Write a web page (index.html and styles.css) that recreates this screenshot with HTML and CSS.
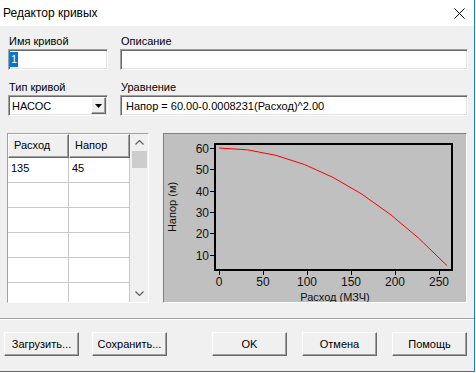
FILE: index.html
```html
<!DOCTYPE html>
<html lang="ru">
<head>
  <meta charset="UTF-8" />
  <title>Редактор кривых</title>
  <link rel="stylesheet" href="styles.css">
</head>
<body>

  <div class="window">
    <!-- Title bar -->
    <div class="titlebar">
      <span class="title">Редактор кривых</span>
      <svg class="close" width="11" height="11" viewBox="0 0 11 11">
        <path d="M0.5 0.5 L10.5 10.5 M10.5 0.5 L0.5 10.5" stroke="#000" stroke-width="1" fill="none"/>
      </svg>
    </div>

    <div class="content">
      <!-- Name / description / type / equation -->
      <div class="fields">
        <div class="label">Имя кривой</div>
        <div class="label">Описание</div>
        <div class="field"><span class="selected">1</span></div>
        <div class="field"></div>

        <div class="label row2">Тип кривой</div>
        <div class="label row2">Уравнение</div>
        <div class="field combo">
          <span class="combo-text">НАСОС</span>
          <span class="drop">
            <svg width="7" height="4" viewBox="0 0 7 4"><path d="M0 0 H7 L3.5 4 Z" fill="#000"/></svg>
          </span>
        </div>
        <div class="field text">Напор = 60.00-0.0008231(Расход)^2.00</div>
      </div>

      <div class="middle">
        <!-- Data grid -->
        <div class="grid-box">
          <div class="grid">
            <div class="grid-row">
              <div class="head-cell">Расход</div>
              <div class="head-cell">Напор</div>
            </div>
            <div class="grid-row">
              <div class="cell">135</div>
              <div class="cell">45</div>
            </div>
            <div class="grid-row"><div class="cell"></div><div class="cell"></div></div>
            <div class="grid-row"><div class="cell"></div><div class="cell"></div></div>
            <div class="grid-row"><div class="cell"></div><div class="cell"></div></div>
            <div class="grid-row"><div class="cell"></div><div class="cell"></div></div>
            <div class="grid-row"><div class="cell"></div><div class="cell"></div></div>
          </div>
          <div class="scrollbar">
            <div class="arrow">
              <svg width="9" height="5" viewBox="0 0 9 5"><path d="M0.5 4.5 L4.5 0.5 L8.5 4.5" stroke="#606060" stroke-width="1.2" fill="none"/></svg>
            </div>
            <div class="thumb"></div>
            <div class="track"></div>
            <div class="arrow">
              <svg width="9" height="5" viewBox="0 0 9 5"><path d="M0.5 0.5 L4.5 4.5 L8.5 0.5" stroke="#606060" stroke-width="1.2" fill="none"/></svg>
            </div>
          </div>
        </div>

        <!-- Pump curve chart -->
        <div class="chart">
          <svg width="302" height="168" viewBox="0 0 302 168">
            <rect x="51" y="10" width="237" height="126" fill="none" stroke="#000" stroke-width="2"/>
            <path d="M55 14 Q169 14 283 131.6" fill="none" stroke="#ff0000" stroke-width="1"/>

            <g stroke="#000" stroke-width="1">
              <line x1="46" y1="14.5" x2="50" y2="14.5"/>
              <line x1="46" y1="35.5" x2="50" y2="35.5"/>
              <line x1="46" y1="57.5" x2="50" y2="57.5"/>
              <line x1="46" y1="78.5" x2="50" y2="78.5"/>
              <line x1="46" y1="99.5" x2="50" y2="99.5"/>
              <line x1="46" y1="121.5" x2="50" y2="121.5"/>
              <line x1="55.5" y1="137" x2="55.5" y2="141"/>
              <line x1="99.5" y1="137" x2="99.5" y2="141"/>
              <line x1="143.5" y1="137" x2="143.5" y2="141"/>
              <line x1="187.5" y1="137" x2="187.5" y2="141"/>
              <line x1="231.5" y1="137" x2="231.5" y2="141"/>
              <line x1="275.5" y1="137" x2="275.5" y2="141"/>
            </g>

            <g class="tick" text-anchor="end">
              <text x="45" y="18.5">60</text>
              <text x="45" y="39.5">50</text>
              <text x="45" y="61.5">40</text>
              <text x="45" y="82.5">30</text>
              <text x="45" y="103.5">20</text>
              <text x="45" y="125.5">10</text>
            </g>
            <g class="tick" text-anchor="middle">
              <text x="55" y="152">0</text>
              <text x="99" y="152">50</text>
              <text x="143" y="152">100</text>
              <text x="187" y="152">150</text>
              <text x="231" y="152">200</text>
              <text x="275" y="152">250</text>
            </g>
            <text class="axis" x="171" y="167" text-anchor="middle">Расход (МЗЧ)</text>
            <text class="axis" x="12" y="73" text-anchor="middle" transform="rotate(-90 12 73)">Напор (м)</text>
          </svg>
        </div>
      </div>

      <div class="separator"></div>

      <div class="buttons">
        <div class="btn">Загрузить...</div>
        <div class="btn btn-save">Сохранить...</div>
        <div class="btn btn-ok">OK</div>
        <div class="btn btn-right">Отмена</div>
        <div class="btn btn-right">Помощь</div>
      </div>
    </div>
  </div>

</body>
</html>
```

FILE: styles.css
```css
* {
  box-sizing: border-box;
  margin: 0;
  padding: 0;
}

body {
  background: #ffffff;
  font-family: 'Liberation Sans', Arial, sans-serif;
  font-size: 11px;
  color: #000;
}

.window {
  width: 475px;
  height: 372px;
  border-right: 1px solid #1e78d2;
  border-bottom: 1px solid #1e78d2;
  background: #f0f0f0;
  display: flex;
  flex-direction: column;
}

.titlebar {
  height: 26px;
  background: #ffffff;
  display: flex;
  align-items: center;
  justify-content: space-between;
  padding: 0 9px 0 3px;
}

.title {
  font-size: 12px;
}

.close {
  display: block;
}

.content {
  flex: 1;
}

/* fields */

.fields {
  display: grid;
  grid-template-columns: 100px 348px;
  column-gap: 12px;
  padding: 8px 0 0 8px;
}

.label {
  line-height: 14px;
  margin-bottom: 1px;
  padding-left: 1px;
}

.label.row2 {
  margin-top: 10px;
}

.field {
  height: 21px;
  background: #ffffff;
  border: 1px solid;
  border-color: #a0a0a0 #ffffff #ffffff #a0a0a0;
  box-shadow: inset 1px 1px 0 #696969, inset -1px -1px 0 #e3e3e3;
  display: flex;
  align-items: center;
  padding-left: 1px;
  white-space: nowrap;
  overflow: hidden;
}

.field.text {
  padding-left: 5px;
}

.selected {
  background: #0078d7;
  color: #ffffff;
  line-height: 15px;
  padding: 0 1px;
}

.combo {
  justify-content: space-between;
  padding-left: 3px;
  padding-right: 1px;
}

.drop {
  width: 15px;
  height: 17px;
  background: #f0f0f0;
  border: 1px solid;
  border-color: #ffffff #696969 #696969 #ffffff;
  box-shadow: inset -1px -1px 0 #a0a0a0;
  display: flex;
  align-items: center;
  justify-content: center;
}

/* grid + chart */

.middle {
  display: flex;
  gap: 14px;
  margin-top: 17px;
  padding-left: 7px;
}

.grid-box {
  width: 142px;
  height: 170px;
  border: 1px solid;
  border-color: #a0a0a0 #ffffff #ffffff #a0a0a0;
  background: #ffffff;
  display: flex;
  overflow: hidden;
}

.grid {
  width: 122px;
}

.grid-row {
  display: flex;
  height: 25px;
}

.grid-row:first-child {
  height: 24px;
}

.head-cell {
  width: 61px;
  background: #f0f0f0;
  border: 1px solid;
  border-color: #ffffff #696969 #696969 #ffffff;
  box-shadow: inset -1px -1px 0 #a0a0a0;
  padding: 4px 0 0 5px;
}

.cell {
  width: 61px;
  border-right: 1px solid #c8c8c8;
  border-bottom: 1px solid #c8c8c8;
  padding: 4px 0 0 3px;
}

.scrollbar {
  width: 18px;
  background: #f0f0f0;
  display: flex;
  flex-direction: column;
  padding-left: 1px;
}

.arrow {
  height: 17px;
  display: flex;
  align-items: center;
  justify-content: center;
}

.thumb {
  height: 17px;
  background: #cdcdcd;
  margin: 0 1px;
}

.track {
  flex: 1;
}

.chart {
  width: 304px;
  height: 170px;
  background: #c0c0c0;
  border: 1px solid;
  border-color: #808080 #ffffff #ffffff #808080;
}

.chart svg {
  display: block;
}

.chart .tick {
  font-family: 'Liberation Sans', Arial, sans-serif;
  font-size: 12px;
  fill: #101010;
}

.chart .axis {
  font-family: 'Liberation Sans', Arial, sans-serif;
  font-size: 11px;
  fill: #101010;
}

/* bottom */

.separator {
  margin-top: 15px;
  border-top: 1px solid #a0a0a0;
  border-bottom: 1px solid #ffffff;
}

.buttons {
  display: flex;
  margin-top: 12px;
  padding: 0 7px 0 4px;
}

.btn {
  width: 75px;
  height: 24px;
  background: #f0f0f0;
  border: 1px solid;
  border-color: #ffffff #696969 #696969 #ffffff;
  box-shadow: inset -1px -1px 0 #a0a0a0;
  display: flex;
  align-items: center;
  justify-content: center;
}

.btn-save {
  margin-left: 13px;
}

.btn-ok {
  margin-left: auto;
}

.btn-right {
  margin-left: 15px;
}
```
